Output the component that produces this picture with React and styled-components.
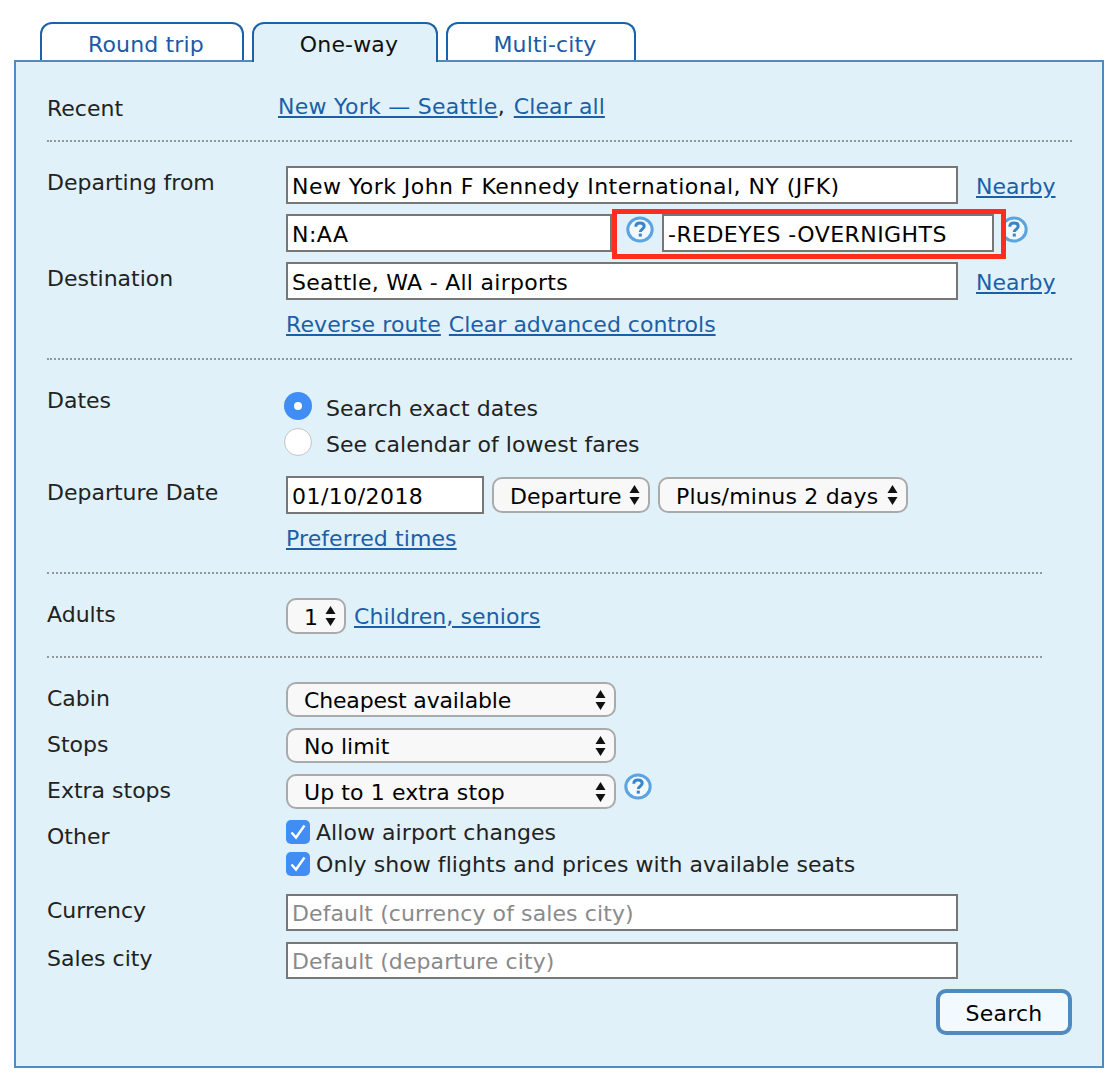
import React from 'react';
import styled, { createGlobalStyle } from 'styled-components';

const Global = createGlobalStyle`
  html, body { margin: 0; padding: 0; background: #fff; }
  body { font-family: "DejaVu Sans", Verdana, sans-serif; font-size: 22px; color: #222; }
`;

const Page = styled.div`
  width: 1120px;
  height: 1084px;
  padding: 22px 0 0 14px;
  box-sizing: border-box;
`;
const TabBar = styled.div`
  display: flex;
  gap: 8px;
  padding-left: 26px;
  height: 38px;
`;
const Tab = styled.div`
  width: ${p => p.$w}px;
  height: ${p => (p.$active ? 40 : 38)}px;
  box-sizing: border-box;
  border: 2px solid #1b63a8;
  border-bottom: 0;
  border-radius: 12px 12px 0 0;
  background: ${p => (p.$active ? '#e0f1f9' : '#fff')};
  color: ${p => (p.$active ? '#111' : '#1b5aa6')};
  text-align: center;
  padding-left: 8px;
  letter-spacing: 0.15px;
  line-height: 42px;
  position: relative;
  z-index: 1;
`;
const Panel = styled.div`
  width: 1090px;
  height: 1008px;
  box-sizing: border-box;
  border: 2px solid #4f8ac0;
  background: #e0f1f9;
  padding: 0 30px 0 31px;
`;
const Section = styled.div`
  padding: ${p => p.$top}px 0 ${p => p.$bottom}px;
  display: flex;
  flex-direction: column;
`;
const Divider = styled.div`
  height: 0;
  width: ${p => p.$w}px;
  border-top: 2px dotted #8f9799;
`;
const Row = styled.div`
  display: grid;
  grid-template-columns: 239px 1fr;
  margin-top: ${p => p.$mt || 0}px;
`;
const Label = styled.div`
  line-height: 28px;
  padding-top: ${p => p.$top || 0}px;
  color: #222;
`;
const Controls = styled.div`
  display: flex;
  align-items: ${p => p.$align || 'center'};
  gap: ${p => p.$gap ?? 8}px;
  min-height: 28px;
`;
const Stack = styled.div`
  display: flex;
  flex-direction: column;
  gap: ${p => p.$gap}px;
  padding-top: ${p => p.$top || 0}px;
`;
const Link = styled.a`
  color: #1b5fa8;
  text-decoration: underline;
  padding-top: ${p => p.$pt ?? 2}px;
  line-height: ${p => 28 - (p.$pt ?? 2)}px;
  letter-spacing: ${p => p.$ls ?? 0.1}px;
  cursor: pointer;
  margin-left: ${p => p.$ml || 0}px;
`;
const Text = styled.span`
  padding-top: 2px;
  line-height: 26px;
  letter-spacing: 0.06px;
  color: #222;
`;
const Input = styled.input`
  width: ${p => p.$w}px;
  height: ${p => p.$h || 38}px;
  box-sizing: border-box;
  border: 2px solid #777;
  border-radius: 0;
  background: #fff;
  padding: 2px 4px 0;
  margin: 0;
  font: inherit;
  letter-spacing: ${p => p.$ls ?? 0.45}px;
  color: #000;
  flex: none;
  outline: none;
  &::placeholder { color: #8a8a8a; opacity: 1; letter-spacing: 0.1px; }
`;
const HighlightBox = styled.div`
  display: flex;
  align-items: flex-start;
  flex: none;
  width: 394px;
  height: 50px;
  box-sizing: border-box;
  margin: -5px 0 -7px;
  border: 5px solid #ff2d20;
  background: #e0f1f9;
  position: relative;
  z-index: 1;
`;
const SelectWrap = styled.div`
  position: relative;
  width: ${p => p.$w}px;
  height: ${p => p.$h || 36}px;
  flex: none;
`;
const Select = styled.select`
  appearance: none;
  width: 100%;
  height: 100%;
  box-sizing: border-box;
  border: 2px solid #aaa;
  border-radius: 10px;
  background: #f8f8f8;
  margin: 0;
  padding: 2px 0 0 16px;
  font: inherit;
  letter-spacing: ${p => p.$ls || 0}px;
  color: #000;
  outline: none;
`;
const Arrows = styled.svg`
  position: absolute;
  right: 10px;
  top: 50%;
  margin-top: -10px;
  width: 11px;
  height: 20px;
  pointer-events: none;
`;
const HelpSvg = styled.svg`
  flex: none;
  width: 28px;
  height: 28px;
  margin: ${p => p.$m || 0};
`;
const Radio = styled.span`
  flex: none;
  width: 28px;
  height: 28px;
  box-sizing: border-box;
  border-radius: 50%;
  margin: -4px 0 0 -2px;
  background: ${p => (p.$on ? '#3f8df5' : '#fff')};
  border: ${p => (p.$on ? '0' : '1px solid #c4c4c4')};
  display: flex;
  align-items: center;
  justify-content: center;
  &::after {
    content: '';
    display: ${p => (p.$on ? 'block' : 'none')};
    width: 8px;
    height: 8px;
    border-radius: 50%;
    background: #fff;
  }
`;
const Check = styled.span`
  flex: none;
  width: 24px;
  height: 24px;
  border-radius: 5px;
  background: #3f8df5;
  display: flex;
  align-items: center;
  justify-content: center;
`;
const Actions = styled.div`
  display: flex;
  justify-content: flex-end;
  margin-top: 10px;
`;
const SearchButton = styled.button`
  width: 136px;
  height: 46px;
  box-sizing: border-box;
  border: 4px solid #4f8ac0;
  border-radius: 10px;
  background: #f2faff;
  font: inherit;
  letter-spacing: 0.2px;
  color: #000;
  padding: 2px 0 0;
`;

const Help = ({ m }) => (
  <HelpSvg viewBox="0 0 28 28" $m={m}>
    <ellipse cx="14" cy="13.5" rx="12.2" ry="11.6" fill="#f2f9fe" stroke="#5ba4e0" strokeWidth="3" />
    <path d="M9.8 10.8c0-2.6 1.9-3.9 4.2-3.9s4.2 1.2 4.2 3.4c0 2.9-3.9 2.8-3.9 5.6" fill="none" stroke="#3a85c8" strokeWidth="3" />
    <rect x="12.8" y="17.6" width="3" height="3" fill="#3a85c8" />
  </HelpSvg>
);
const Sel = ({ w, h, value, ls }) => (
  <SelectWrap $w={w} $h={h}>
    <Select defaultValue={value} $ls={ls}><option>{value}</option></Select>
    <Arrows viewBox="0 0 11 20">
      <path d="M5.5 0L10.5 8H.5zM5.5 20L.5 12h10z" fill="#111" />
    </Arrows>
  </SelectWrap>
);
const Tick = () => (
  <Check>
    <svg width="18" height="18" viewBox="0 0 18 18">
      <path d="M2.5 9.5L7 14.5L15.5 2.5" fill="none" stroke="#fff" strokeWidth="2.4" />
    </svg>
  </Check>
);

export default function App() {
  return (
    <Page>
      <Global />
      <TabBar>
        <Tab $w={204}>Round trip</Tab>
        <Tab $w={186} $active>One-way</Tab>
        <Tab $w={190}>Multi-city</Tab>
      </TabBar>
      <Panel>
        <Section $top={30} $bottom={17}>
          <Row>
            <Label $top={3}>Recent</Label>
            <Controls $gap={0} $align="flex-start">
              <Link $ml={-8} $ls={0.28}>New York — Seattle</Link><Text>,&nbsp;</Text><Link $ml={2}>Clear all</Link>
            </Controls>
          </Row>
        </Section>
        <Divider $w={1025} />
        <Section $top={24} $bottom={20}>
          <Row>
            <Label $top={3}>Departing from</Label>
            <Controls $gap={18}>
              <Input $w={672} defaultValue="New York John F Kennedy International, NY (JFK)" />
              <Link $ls={0} $pt={4}>Nearby</Link>
            </Controls>
          </Row>
          <Row $mt={10}>
            <Label />
            <Controls $gap={0} $align="flex-start">
              <Input $w={326} defaultValue="N:AA" />
              <HighlightBox>
                <Help m="2px 8px 0 9px" />
                <Input $w={332} defaultValue="-REDEYES -OVERNIGHTS" />
              </HighlightBox>
              <Help m="2px 0 0 -6px" />
            </Controls>
          </Row>
          <Row $mt={10}>
            <Label $top={3}>Destination</Label>
            <Controls $gap={18}>
              <Input $w={672} $ls={0.27} defaultValue="Seattle, WA - All airports" />
              <Link $ls={0} $pt={4}>Nearby</Link>
            </Controls>
          </Row>
          <Row $mt={10}>
            <Label />
            <Controls>
              <Link>Reverse route</Link><Link $ls={0}>Clear advanced controls</Link>
            </Controls>
          </Row>
        </Section>
        <Divider $w={1025} />
        <Section $top={26} $bottom={20}>
          <Row>
            <Label $top={1}>Dates</Label>
            <Stack $gap={8} $top={8}>
              <Controls $gap={14}><Radio $on /><Text>Search exact dates</Text></Controls>
              <Controls $gap={14}><Radio /><Text>See calendar of lowest fares</Text></Controls>
            </Stack>
          </Row>
          <Row $mt={18}>
            <Label $top={3}>Departure Date</Label>
            <Controls>
              <Input $w={198} defaultValue="01/10/2018" />
              <Sel w={158} value="Departure" />
              <Sel w={250} value="Plus/minus 2 days" ls={0.2} />
            </Controls>
          </Row>
          <Row $mt={10}>
            <Label />
            <Controls><Link>Preferred times</Link></Controls>
          </Row>
        </Section>
        <Divider $w={995} />
        <Section $top={24} $bottom={22}>
          <Row>
            <Label $top={3}>Adults</Label>
            <Controls>
              <Sel w={60} value="1" />
              <Link>Children, seniors</Link>
            </Controls>
          </Row>
        </Section>
        <Divider $w={995} />
        <Section $top={24} $bottom={0}>
          <Row>
            <Label $top={3}>Cabin</Label>
            <Controls><Sel w={330} h={35} value="Cheapest available" ls={-0.17} /></Controls>
          </Row>
          <Row $mt={11}>
            <Label $top={3}>Stops</Label>
            <Controls><Sel w={330} h={35} value="No limit" /></Controls>
          </Row>
          <Row $mt={11}>
            <Label $top={3}>Extra stops</Label>
            <Controls $align="flex-start">
              <Sel w={330} h={35} value="Up to 1 extra stop" ls={0.1} />
              <Help m="-1px 0 0 0" />
            </Controls>
          </Row>
          <Row $mt={9}>
            <Label $top={5}>Other</Label>
            <Stack $gap={4}>
              <Controls $gap={6}><Tick /><Text>Allow airport changes</Text></Controls>
              <Controls $gap={6}><Tick /><Text>Only show flights and prices with available seats</Text></Controls>
            </Stack>
          </Row>
          <Row $mt={16}>
            <Label $top={3}>Currency</Label>
            <Controls><Input $w={672} $h={37} placeholder="Default (currency of sales city)" /></Controls>
          </Row>
          <Row $mt={11}>
            <Label $top={3}>Sales city</Label>
            <Controls><Input $w={672} $h={37} placeholder="Default (departure city)" /></Controls>
          </Row>
          <Actions><SearchButton>Search</SearchButton></Actions>
        </Section>
      </Panel>
    </Page>
  );
}
